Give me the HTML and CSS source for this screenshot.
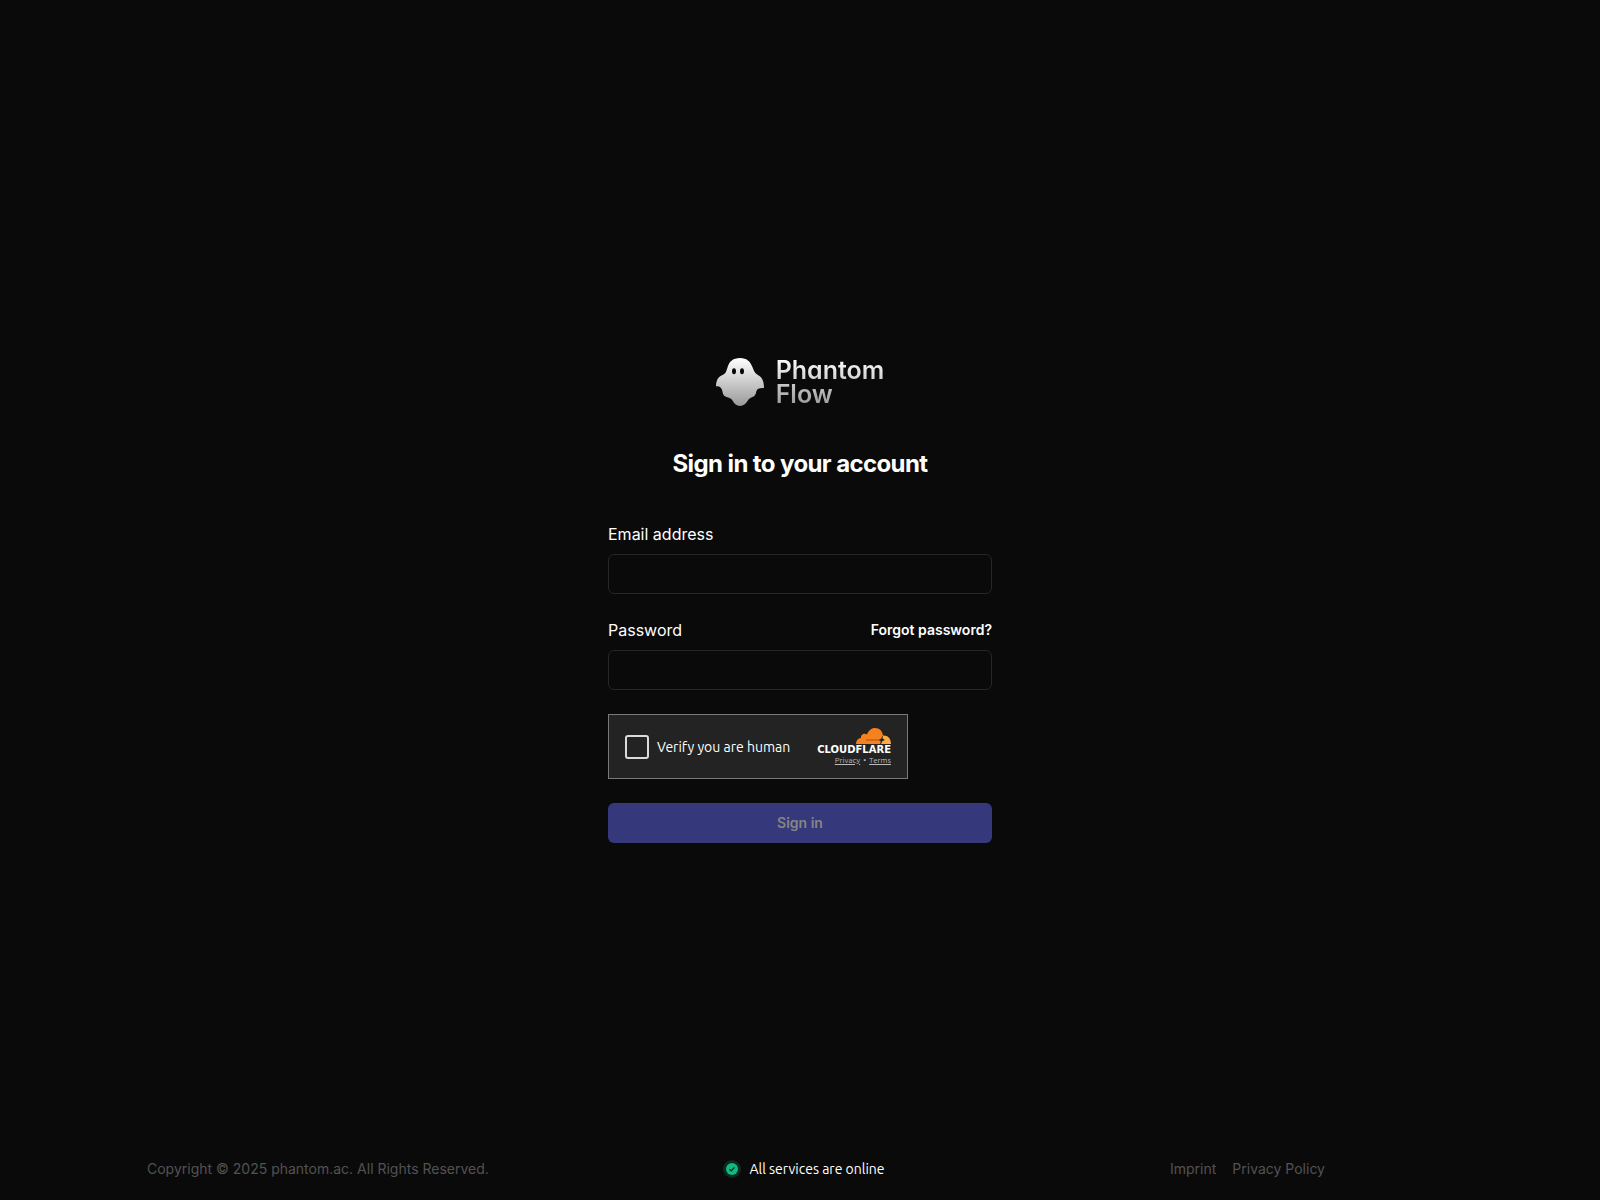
FILE: index.html
```html
<!DOCTYPE html>
<html lang="en">
<head>
<meta charset="utf-8">
<meta name="viewport" content="width=device-width, initial-scale=1">
<title>Phantom Flow</title>
<link rel="stylesheet" href="styles.css">
</head>
<body>

<main class="main">
  <div class="logo">
    <svg class="logo-ghost" viewBox="0 0 48 48" aria-hidden="true">
      <defs>
        <linearGradient id="ghost" x1="0" y1="0" x2="0" y2="1">
          <stop offset="0" stop-color="#fff"/>
          <stop offset="1" stop-color="#999"/>
        </linearGradient>
      </defs>
      <path fill="url(#ghost)" d="M24 0C17 0 13.500 3.500 11.800 8.500C10.500 12.500 10 15.500 7 16.700C3 18.300 0 21.500 0 28.300C3.500 27.800 5.500 29.500 6.200 32.500C7 36.500 7.500 37.800 10.500 39C13 40 15 40 16.500 42.500C18.300 45.800 20.500 48 24 48C27.500 48 29.700 45.800 31.500 43C33 40.500 34 40 36.500 39C39 38 39.700 36.500 40.300 33.500C41 30.500 43.500 29.800 48 30C48 23 46 18.800 41.500 16.700C38.500 15.300 37.700 12 36.200 8.500C34 3.500 31 0 24 0Z"/>
      <ellipse cx="18" cy="13.300" rx="2" ry="3" fill="#0a0a0a"/>
      <ellipse cx="26" cy="13.300" rx="2" ry="3" fill="#0a0a0a"/>
    </svg>
    <div class="logo-text">Phantom<br>Flow</div>
  </div>

  <h1 class="title">Sign in to your account</h1>

  <form class="form">
    <div class="field">
      <label for="email">Email address</label>
      <input class="input" id="email" type="email" name="email">
    </div>

    <div class="field">
      <div class="field-head">
        <label for="password">Password</label>
        <a class="forgot" href="#">Forgot password?</a>
      </div>
      <input class="input" id="password" type="password" name="password">
    </div>

    <div class="captcha">
      <label class="captcha-check">
        <input class="captcha-box" type="checkbox">
        Verify you are human
      </label>
      <div class="captcha-brand">
        <svg class="cloud" viewBox="0 0 35 16" aria-hidden="true">
          <path fill="#fbad41" d="M27 7.500C31.500 7 35 10.500 35 16H24.500L25.500 13.500Z"/>
          <path fill="#f6821f" d="M0 16C0 12.500 2 10.300 5 10C4.400 7 8 4.500 11 6.500C12.500 2.500 15.500 0 19 0C23.500 0 26.500 3 27 7.500L24.500 16Z"/>
          <path stroke="#b35a17" stroke-width="1.200" d="M10 12H24"/>
          <path fill="#232323" d="M26.500 7.500L26.500 10.500L29 12L26.500 13L25 16H24.200L24.800 13.200L23 12L25.300 10.500Z"/>
        </svg>
        <span class="wordmark">CLOUDFLARE</span>
        <div class="captcha-links">
          <a href="#">Privacy</a>
          <span>•</span>
          <a href="#">Terms</a>
        </div>
      </div>
    </div>

    <button class="submit" type="submit" disabled>Sign in</button>
  </form>
</main>

<footer class="footer">
  <p class="copyright">Copyright © 2025 phantom.ac. All Rights Reserved.</p>
  <div class="status">
    <svg class="status-icon" viewBox="0 0 18 18" aria-hidden="true">
      <circle cx="9" cy="9" r="9" fill="#0b2b21"/>
      <circle cx="9" cy="9" r="6" fill="#10b981"/>
      <path d="M6.500 9.200L8.200 10.900L11.500 7.400" fill="none" stroke="#0b2b21" stroke-width="1.300"/>
    </svg>
    All services are online
  </div>
  <nav class="footer-links">
    <a href="#">Imprint</a>
    <a href="#">Privacy Policy</a>
  </nav>
</footer>

</body>
</html>
```
FILE: styles.css
```css
* {
  box-sizing: border-box;
}

body {
  margin: 0;
  min-height: 100vh;
  display: grid;
  grid-template-rows: 62px 1fr 62px;
  background: #0a0a0a;
  color: #fff;
  font-family: Inter, sans-serif;
  font-size: 16px;
  line-height: 24px;
}

a {
  color: inherit;
  text-decoration: none;
}

.main {
  grid-row: 2;
  align-self: center;
  justify-self: center;
  width: 100%;
  max-width: 384px;
}

/* logo */
.logo {
  display: flex;
  justify-content: center;
  align-items: center;
  gap: 12px;
}

.logo-ghost {
  width: 48px;
  height: 48px;
}

.logo-text {
  font-size: 25px;
  font-weight: 600;
  line-height: 24px;
  font-feature-settings: "cv11";
  background: linear-gradient(#fff, #999);
  -webkit-background-clip: text;
  background-clip: text;
  color: transparent;
}

.title {
  margin: 40px 0;
  font-size: 24px;
  font-weight: 700;
  line-height: 36px;
  letter-spacing: -0.025em;
  text-align: center;
}

/* form */
.form {
  display: flex;
  flex-direction: column;
  gap: 24px;
}

.field {
  display: flex;
  flex-direction: column;
  gap: 8px;
}

.field-head {
  display: flex;
  justify-content: space-between;
}

.forgot {
  font-size: 14px;
  font-weight: 600;
}

.input {
  width: 100%;
  height: 40px;
  padding: 0 12px;
  border: 1px solid #262626;
  border-radius: 6px;
  background: transparent;
  color: #fff;
  font: inherit;
}

.submit {
  height: 40px;
  border: 0;
  border-radius: 6px;
  background: #36387c;
  color: #858585;
  font-family: inherit;
  font-size: 14px;
  font-weight: 600;
}

/* captcha widget */
.captcha {
  display: flex;
  justify-content: space-between;
  align-items: center;
  width: 300px;
  height: 65px;
  padding: 1px 16px 0;
  border: 1px solid #797979;
  background: #232323;
  font-family: Ubuntu, "Noto Sans", sans-serif;
}

.captcha-check {
  display: flex;
  align-items: center;
  gap: 8px;
  font-size: 14px;
}

.captcha-box {
  appearance: none;
  width: 24px;
  height: 24px;
  margin: 0;
  border: 2px solid #dadada;
  border-radius: 3px;
}

.captcha-brand {
  display: flex;
  flex-direction: column;
  align-items: flex-end;
}

.cloud {
  width: 35px;
  height: 16px;
}

.wordmark {
  font-family: "DejaVu Sans", sans-serif;
  font-size: 10px;
  font-weight: 700;
  line-height: 12px;
}

.captcha-links {
  display: flex;
  gap: 3px;
  color: #bbb;
  font-size: 8px;
  line-height: 10px;
}

.captcha-links a {
  text-decoration: underline;
}

/* footer */
.footer {
  grid-row: 3;
  display: grid;
  grid-template-columns: 1fr auto 1fr;
  align-items: center;
  padding: 0 147px;
  color: #525252;
  font-size: 14px;
}

.copyright {
  margin: 0;
}

.status {
  display: flex;
  align-items: center;
  gap: 8px;
  padding-left: 8px;
  color: #fff;
  font-family: Ubuntu, "Noto Sans", sans-serif;
}

.status-icon {
  width: 18px;
  height: 18px;
}

.footer-links {
  display: flex;
  justify-content: flex-end;
  gap: 16px;
  padding-right: 128px;
}
```
